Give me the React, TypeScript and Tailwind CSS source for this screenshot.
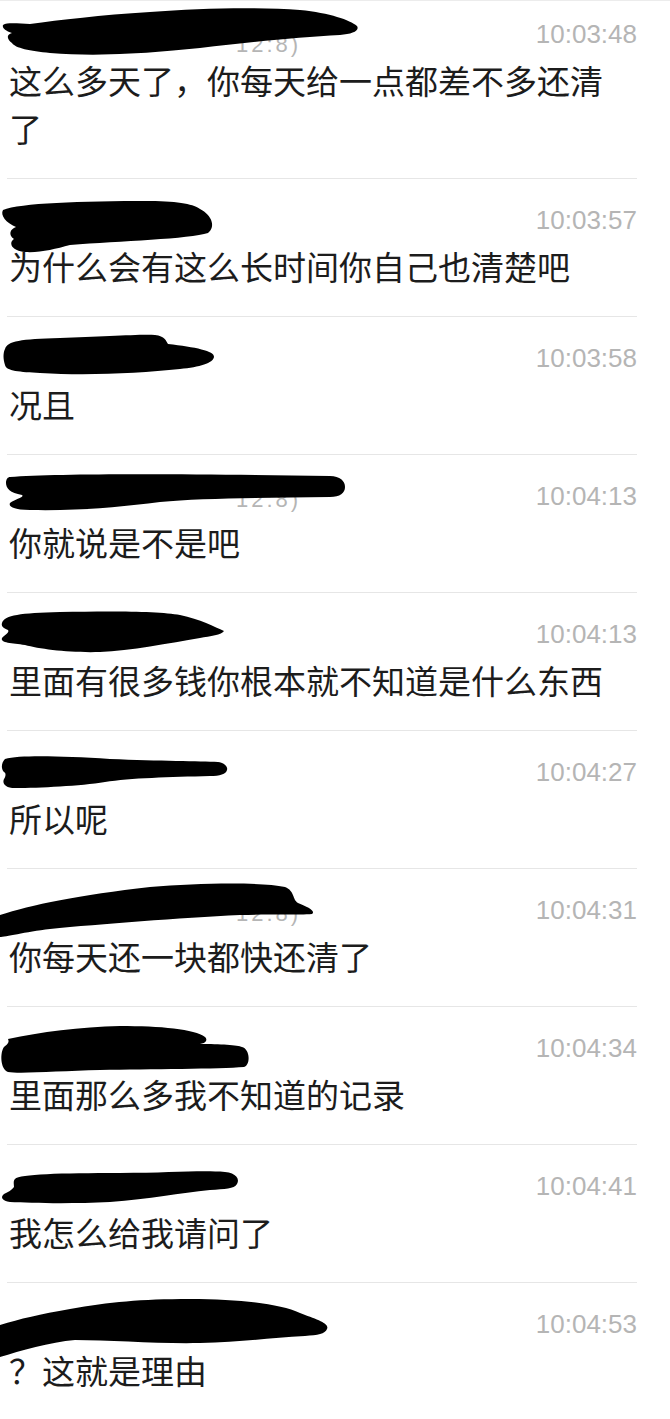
import React from "react";

type Entry = {
  ts: string;
  msg: string;
  blob: string;
  remnant?: { left: number; top: number; text: string };
};

const entries: Entry[] = [
  {
    ts: "10:03:48",
    msg: "这么多天了，你每天给一点都差不多还清了",
    blob: "M3,32 C8,29 20,31 30,31 C60,27 100,22 150,19 C200,15 260,14 300,17 C330,20 350,27 357,33 C360,38 352,41 340,42 C300,44 250,49 200,55 C150,60 100,64 50,60 C30,58 15,55 12,50 C8,47 5,42 12,40 C5,38 2,35 3,32 Z",
    remnant: { left: 236, top: 43, text: "12:8)" },
  },
  {
    ts: "10:03:57",
    msg: "为什么会有这么长时间你自己也清楚吧",
    blob: "M3,31 C20,24 80,22 150,22 C180,22 195,26 200,30 C212,36 216,48 208,54 C190,60 120,62 70,66 C55,70 40,74 25,73 C12,72 8,64 14,60 C8,56 10,50 16,48 C6,44 0,36 3,31 Z",
  },
  {
    ts: "10:03:58",
    msg: "况且",
    blob: "M5,32 C8,24 20,22 60,21 C100,20 140,17 155,18 C165,19 166,24 168,27 C195,30 215,34 214,40 C213,46 200,50 180,52 C140,56 90,59 40,56 C20,55 6,54 5,48 C3,42 3,36 5,32 Z",
  },
  {
    ts: "10:04:13",
    msg: "你就说是不是吧",
    blob: "M10,22 C60,18 200,19 330,21 C340,21 345,26 345,32 C345,38 340,42 330,42 C260,43 200,43 160,47 C120,52 80,56 30,55 C15,55 8,52 10,48 C15,44 25,42 22,40 C10,38 6,33 6,28 C6,24 8,22 10,22 Z",
    remnant: { left: 236, top: 36, text: "12:8)" },
  },
  {
    ts: "10:04:13",
    msg: "里面有很多钱你根本就不知道是什么东西",
    blob: "M2,30 C5,22 20,20 60,19 C110,18 160,18 180,22 C200,26 215,34 224,38 C222,42 210,43 200,45 C170,50 130,58 100,59 C70,60 40,56 25,52 C12,50 0,50 2,45 C4,42 10,40 8,37 C3,35 1,33 2,30 Z",
  },
  {
    ts: "10:04:27",
    msg: "所以呢",
    blob: "M5,28 C20,24 60,25 110,28 C160,30 200,30 218,31 C225,32 228,36 227,39 C226,43 220,45 210,45 C170,46 130,47 105,51 C80,55 40,57 15,57 C5,57 2,52 4,48 C6,45 6,42 4,41 C1,38 1,32 5,28 Z",
  },
  {
    ts: "10:04:31",
    msg: "你每天还一块都快还清了",
    blob: "M0,46 C30,36 80,26 150,18 C200,14 260,13 285,18 C295,22 292,30 298,34 C308,38 316,42 312,45 C300,46 270,45 240,46 C180,49 100,55 50,60 C25,63 5,68 0,68 Z",
    remnant: { left: 236, top: 36, text: "12:8)" },
  },
  {
    ts: "10:04:34",
    msg: "里面那么多我不知道的记录",
    blob: "M8,32 C40,25 80,20 120,19 C160,19 195,22 205,30 C208,33 206,36 200,37 C220,37 238,38 242,40 C250,42 251,58 244,60 C220,62 150,62 100,63 C60,64 20,67 8,65 C0,62 0,45 4,40 C6,38 10,36 8,32 Z",
  },
  {
    ts: "10:04:41",
    msg: "我怎么给我请问了",
    blob: "M15,34 C20,29 60,28 120,28 C170,28 200,25 225,27 C236,28 240,34 237,39 C234,44 225,44 210,45 C180,48 150,54 110,57 C70,59 30,58 10,57 C2,56 0,52 4,49 C8,47 12,45 14,42 C14,39 13,36 15,34 Z",
  },
  {
    ts: "10:04:53",
    msg: "？这就是理由",
    blob: "M0,42 C20,36 40,31 70,26 C110,19 140,16 190,16 C240,16 280,21 300,30 C315,36 330,40 327,46 C325,51 318,52 305,53 C270,55 240,59 200,60 C160,61 110,57 75,57 C50,59 20,68 0,74 Z",
  },
];

export default function App() {
  return (
    <div className="relative h-[1419px] w-[670px] overflow-hidden bg-white">
      <div className="h-px w-full bg-[#ececec]" />
      <div className="-mt-[8px]">
        {entries.map((e, i) => (
          <div key={i} className="relative">
            <div className="ml-[7px] mr-[33px] border-b border-[#e6e6e6] pb-[26px] pt-[21px]">
              <div
                className="flex h-[40px] items-center justify-end text-[26px] text-[#b5b5b5]"
                style={{ fontFamily: '"Liberation Sans", Arial, sans-serif' }}
              >
                {e.ts}
              </div>
              <div
                className="mt-[2px] w-[610px] pl-[2px] text-[33px] leading-[48px] text-[#1c1c1c]"
                style={{ fontFamily: '"Noto Sans CJK SC", "Noto Sans", sans-serif' }}
              >
                {e.msg}
              </div>
            </div>
            {e.remnant && (
              <span
                className="absolute text-[22px] leading-[17px] tracking-[3px] text-[#b5b5b5]"
                style={{
                  left: e.remnant.left,
                  top: e.remnant.top,
                  fontFamily: '"Liberation Sans", Arial, sans-serif',
                }}
              >
                {e.remnant.text}
              </span>
            )}
            <svg
              className="pointer-events-none absolute left-0 top-0"
              width="670"
              height="100"
              viewBox="0 0 670 100"
            >
              <path d={e.blob} fill="#000" />
            </svg>
          </div>
        ))}
      </div>
    </div>
  );
}
